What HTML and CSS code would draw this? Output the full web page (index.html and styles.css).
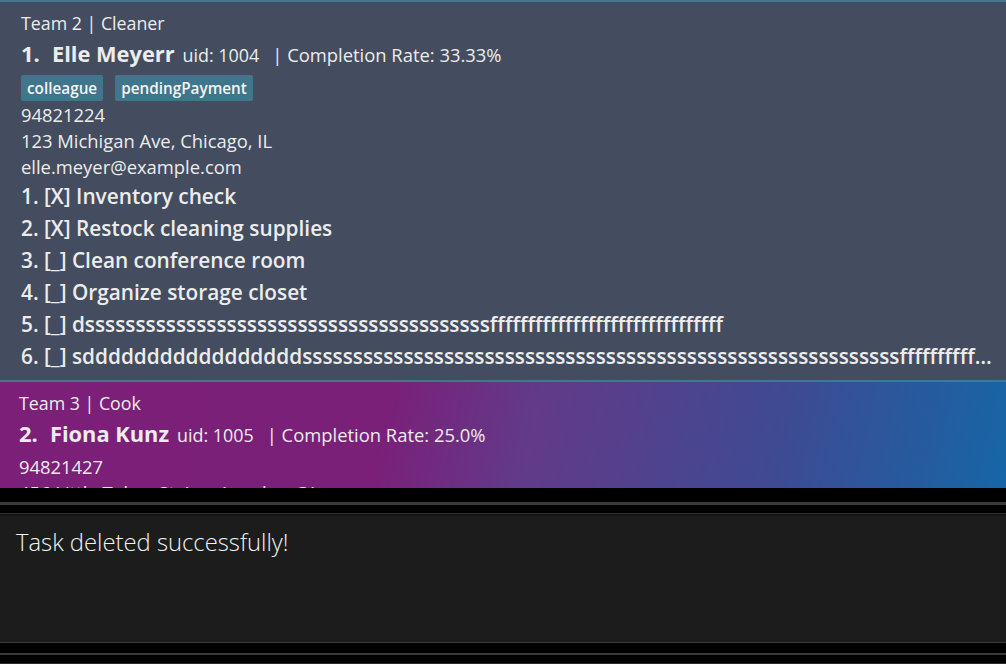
FILE: index.html
```html
<!DOCTYPE html>
<html>
<head>
<meta charset="utf-8">
<link rel="stylesheet" href="styles.css">
</head>
<body>
<div class="app">
  <div class="list">
    <div class="card card-dark">
      <div class="team">Team 2 | Cleaner</div>
      <div class="name-row">
        <span class="idx">1.</span>
        <span class="name">Elle Meyerr</span>
        <span class="uid">uid: 1004</span>
        <span class="rate">| Completion Rate: 33.33%</span>
      </div>
      <div class="tags">
        <span class="tag">colleague</span>
        <span class="tag">pendingPayment</span>
      </div>
      <div class="info">94821224</div>
      <div class="info">123 Michigan Ave, Chicago, IL</div>
      <div class="info">elle.meyer@example.com</div>
      <div class="tasks">
        <div class="task">1. [X] Inventory check</div>
        <div class="task">2. [X] Restock cleaning supplies</div>
        <div class="task">3. [_] Clean conference room</div>
        <div class="task">4. [_] Organize storage closet</div>
        <div class="task">5. [_] dssssssssssssssssssssssssssssssssssssssssfffffffffffffffffffffffffffffff</div>
        <div class="task">6. [_] sdddddddddddddddddsssssssssssssssssssssssssssssssssssssssssssssssssssssssssssffffffffffffffffffffffffffffff</div>
      </div>
    </div>
    <div class="card card-grad">
      <div class="team">Team 3 | Cook</div>
      <div class="name-row">
        <span class="idx">2.</span>
        <span class="name">Fiona Kunz</span>
        <span class="uid">uid: 1005</span>
        <span class="rate">| Completion Rate: 25.0%</span>
      </div>
      <div class="info info-first">94821427</div>
      <div class="info">456 Little Tokyo St, Los Angeles, CA</div>
      <div class="info">fiona.kunz@example.com</div>
    </div>
  </div>
  <div class="sep sep-top"></div>
  <div class="result">
    <div class="result-text">Task deleted successfully!</div>
  </div>
  <div class="sep sep-bottom"></div>
</div>
</body>
</html>
```
FILE: styles.css
```css
html, body {
  margin: 0;
  padding: 0;
  background: #000;
}
.app {
  width: 1006px;
  height: 664px;
  overflow: hidden;
  font-family: "Open Sans", "Noto Sans", sans-serif;
  color: #ececec;
  display: flex;
  flex-direction: column;
}
.list {
  height: 488px;
  overflow: hidden;
  flex: none;
}
.card {
  padding-left: 21px;
  padding-right: 3px;
  box-sizing: border-box;
}
.card-dark {
  background: #434d5f;
  border-top: 2px solid #3b7c8c;
  border-bottom: 2px solid #3b7c8c;
  height: 382px;
  padding-top: 9px;
}
.card-grad {
  background: linear-gradient(102deg, #7c1f78 0%, #7a2079 38%, #623a89 52%, #3f4a92 76%, #1467a7 100%);
  height: 150px;
  padding-top: 9px;
  padding-left: 19px;
}
.team {
  font-size: 17.8px;
  line-height: 24px;
  height: 24px;
  white-space: nowrap;
}
.name-row {
  display: flex;
  align-items: baseline;
  height: 36px;
  line-height: 36px;
  white-space: nowrap;
}
.idx {
  font-size: 22px;
  font-weight: 700;
  width: 31px;
}
.name {
  font-size: 21.8px;
  font-weight: 700;
  margin-right: 8px;
}
.uid {
  font-size: 17.9px;
  margin-right: 13px;
}
.rate {
  font-size: 18.4px;
}
.tags {
  display: flex;
  gap: 12px;
  margin-top: 4px;
  margin-bottom: 1px;
  height: 26px;
}
.tag {
  background: #3f768b;
  color: #f4f4f4;
  font-size: 15.3px;
  font-weight: 600;
  line-height: 26px;
  padding: 0 6px;
  border-radius: 2px;
}
.info {
  font-size: 18.4px;
  line-height: 26px;
  height: 26px;
  white-space: nowrap;
}
.info-first {
  margin-top: 3px;
}
.task {
  font-size: 20.8px;
  font-weight: 600;
  line-height: 32px;
  height: 32px;
  white-space: nowrap;
  overflow: hidden;
  text-overflow: ellipsis;
}
.sep {
  flex: none;
}
.sep-top {
  height: 28px;
  background:
    linear-gradient(#000 0 14px, #3a3a3a 14px 17px, #000 17px 25px, #2e2e2e 25px 26px, #141414 26px 28px);
}
.result {
  flex: none;
  height: 126px;
  background: #1c1c1c;
  padding: 11px 16px 0;
  box-sizing: border-box;
}
.result-text {
  font-size: 23.8px;
  font-weight: 300;
  line-height: 30px;
  color: #f2f2f2;
}
.sep-bottom {
  height: 22px;
  background:
    linear-gradient(#3a3a3a 0 1px, #000 1px 11px, #3a3a3a 11px 13px, #000 13px 21px, #2a2a2a 21px 22px);
}
```
